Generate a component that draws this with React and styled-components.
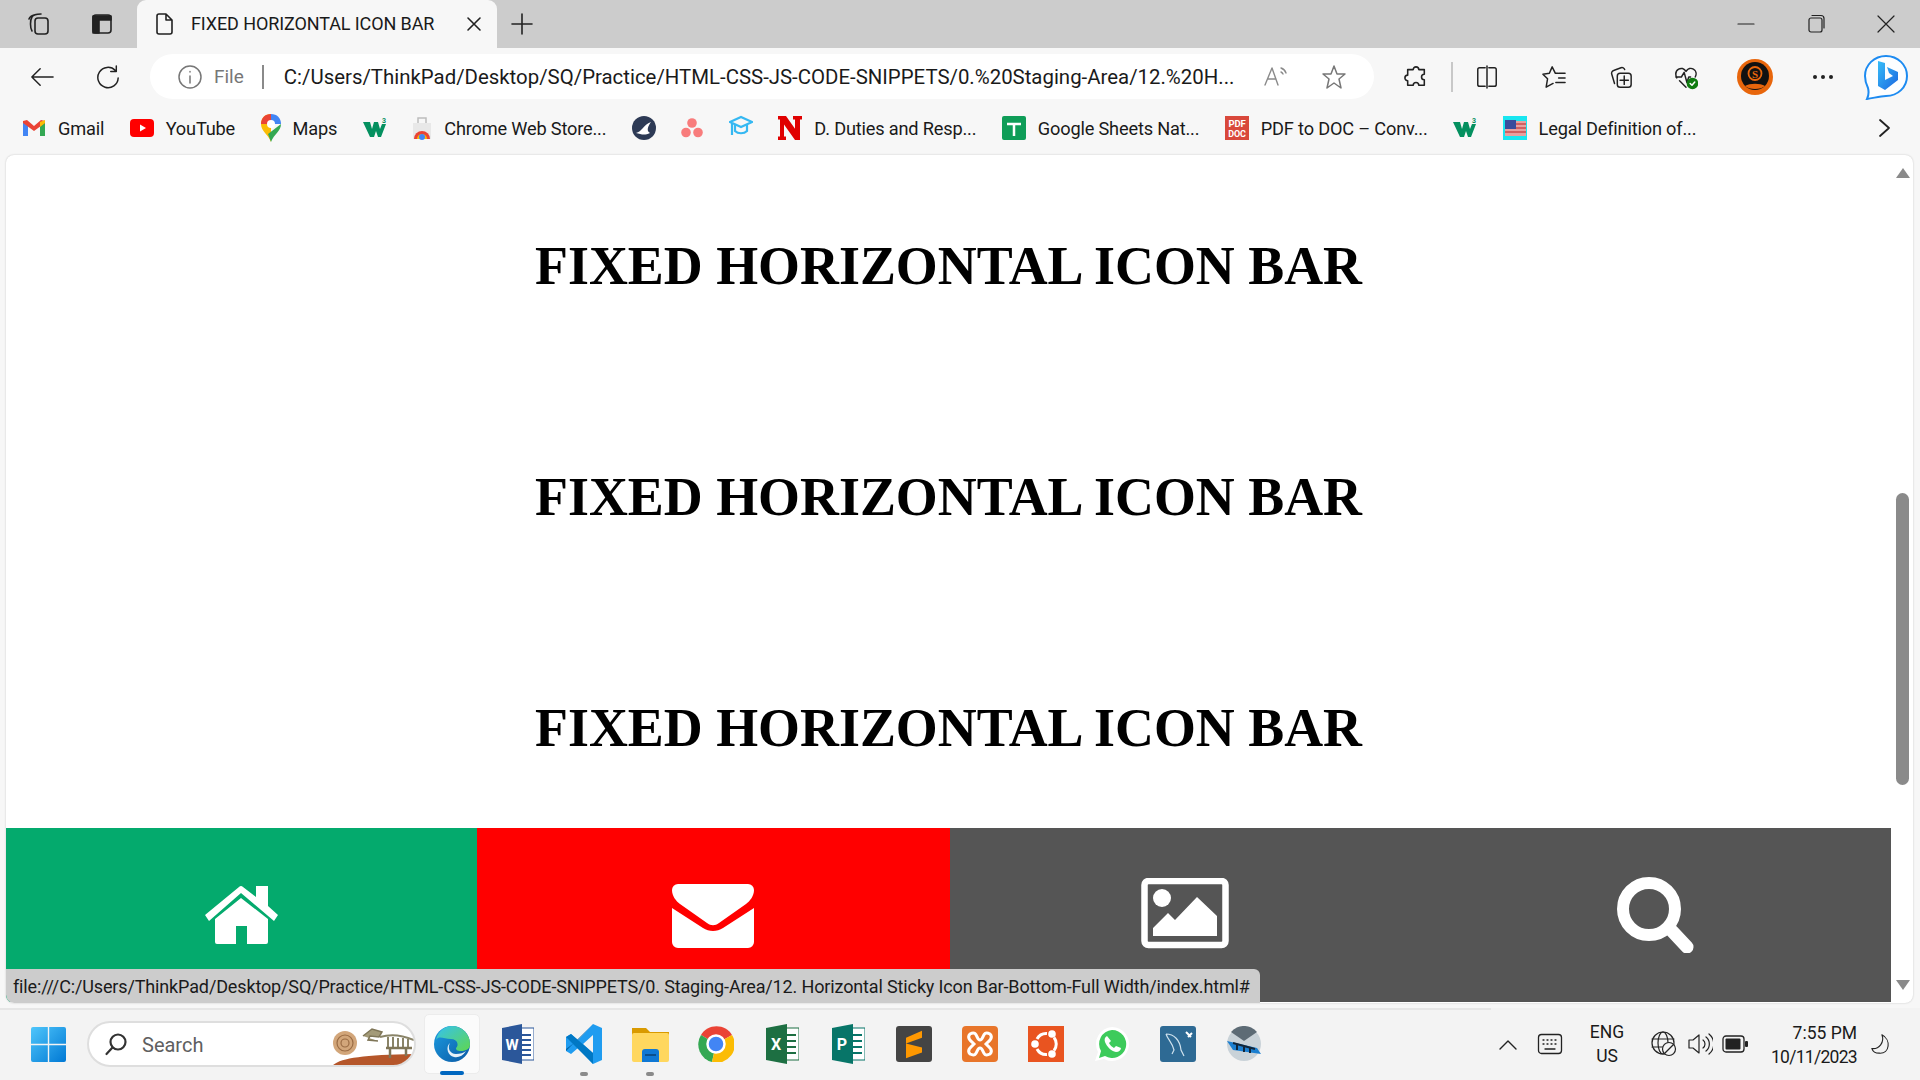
import React from 'react';
import styled, { createGlobalStyle } from 'styled-components';

const Global = createGlobalStyle`
    html, body { margin: 0; padding: 0; background: #f3f3f3; }
    * { box-sizing: border-box; }
`

const Frame = styled.div`
    width: 1920px;
    height: 1080px;
    display: flex;
    flex-direction: column;
    overflow: hidden;
    position: relative;
    background: #f7f7f7;
    font-family: Roboto, "Liberation Sans", sans-serif;
    color: #1a1a1a;
`

/* tab strip */
const TabStrip = styled.div`
    height: 48px;
    flex: none;
    display: flex;
    align-items: center;
    background: #cccccc;
    padding-left: 27px;
`
const StripButton = styled.div`
    width: ${p => p.$w || 24}px;
    height: 24px;
    margin-right: ${p => p.$mr || 0}px;
    display: flex;
    align-items: center;
    justify-content: center;
    flex: none;
`
const Tab = styled.div`
    width: 360px;
    height: 48px;
    flex: none;
    display: flex;
    align-items: center;
    background: #f7f7f7;
    border-radius: 9px 9px 0 0;
    padding: 0 15px 0 17px;
    margin-right: 14px;
`
const TabTitle = styled.span`
    font-size: 18px;
    letter-spacing: -0.1px;
    margin: 0 0 2px 17px;
    flex: 1;
    white-space: nowrap;
`
const WindowControls = styled.div`
    margin-left: auto;
    display: flex;
    padding-right: 22px;
    gap: 46px;
`

/* toolbar */
const Toolbar = styled.div`
    height: 58px;
    flex: none;
    display: flex;
    align-items: center;
    padding: 0 10px 1px 30px;
`
const ToolButton = styled.div`
    width: ${p => p.$w || 24}px;
    height: 36px;
    margin-right: ${p => p.$mr || 0}px;
    margin-left: ${p => p.$ml || 0}px;
    display: flex;
    align-items: center;
    justify-content: center;
    flex: none;
`
const AddressBar = styled.div`
    width: 1224px;
    height: 45px;
    flex: none;
    margin: 0 30px 0 30px;
    display: flex;
    align-items: center;
    background: #fff;
    border-radius: 23px;
    padding: 0 26px 0 27px;
`
const FileLabel = styled.span`
    font-size: 19px;
    color: #777;
    margin-left: 11px;
`
const Divider = styled.span`
    width: 2px;
    height: ${p => p.$h || 24}px;
    background: ${p => p.$c || '#8a8a8a'};
    margin: ${p => p.$m || '0 20px 0 18px'};
    flex: none;
`
const Url = styled.span`
    font-size: 20.4px;
    white-space: nowrap;
    width: 979px;
    flex: none;
`
const ToolbarDivider = styled(Divider)`
    margin: 0 22px 0 23px;
`

/* bookmarks */
const Bookmarks = styled.div`
    height: 49px;
    flex: none;
    display: flex;
    align-items: center;
    padding: 0 26px 5px 22px;
    gap: 25.5px;
`
const Bookmark = styled.div`
    display: flex;
    align-items: center;
    gap: 12px;
    flex: none;
    font-size: 18.2px;
    letter-spacing: -0.18px;
    white-space: nowrap;
    &:last-of-type { margin-right: auto; }
`

/* page */
const Page = styled.div`
    flex: 1;
    min-height: 0;
    margin: 0 7px 5px 6px;
    display: flex;
    background: #fff;
    border-radius: 8px;
    box-shadow: 0 0 2px rgba(0, 0, 0, 0.22);
    overflow: hidden;
    position: relative;
`
const Content = styled.div`
    flex: 1;
    display: flex;
    flex-direction: column;
    min-width: 0;
`
const Headings = styled.div`
    flex: 1;
    display: flex;
    flex-direction: column;
    gap: 167px;
    padding-top: 79px;
`
const Heading = styled.h1`
    margin: 0;
    text-align: center;
    font-family: "Liberation Serif", "Times New Roman", serif;
    font-weight: 700;
    font-size: 53.9px;
    line-height: 64px;
    color: #000;
    white-space: nowrap;
`
const IconBar = styled.div`
    height: 174px;
    flex: none;
    display: grid;
    grid-template-columns: 471px 473px 471px 470px;
    margin-bottom: 1px;
`
const BarLink = styled.a`
    display: flex;
    align-items: center;
    justify-content: center;
    background: ${p => p.$bg || '#555555'};
`
const Scrollbar = styled.div`
    width: 22px;
    flex: none;
    display: flex;
    flex-direction: column;
    align-items: center;
    padding: 13px 0 13px 1px;
`
const Thumb = styled.div`
    width: 13px;
    height: 292px;
    margin-top: 315px;
    background: #8a8a8a;
    border-radius: 7px;
`
const ArrowUp = styled.div`
    width: 0;
    height: 0;
    border-left: 7px solid transparent;
    border-right: 7px solid transparent;
    border-bottom: 10px solid #8a8a8a;
`
const ArrowDown = styled(ArrowUp)`
    margin-top: auto;
    border-bottom: none;
    border-top: 10px solid #8a8a8a;
`
const StatusBubble = styled.div`
    position: absolute;
    left: 0;
    bottom: 0;
    width: 1254px;
    height: 34px;
    display: flex;
    align-items: center;
    padding: 1px 0 0 7px;
    background: #cccccc;
    border-radius: 0 6px 0 8px;
    font-size: 18px;
    letter-spacing: -0.14px;
    white-space: nowrap;
`

/* taskbar */
const Taskbar = styled.div`
    height: 72px;
    flex: none;
    display: flex;
    align-items: center;
    background: #f3f3f3;
    position: relative;
    padding-left: 31px;
`
const TaskbarRule = styled.div`
    position: absolute;
    top: 0;
    left: 0;
    width: 1491px;
    height: 2px;
    background: #e6e6e6;
`
const SearchPill = styled.div`
    width: 329px;
    height: 46px;
    margin-left: 21px;
    flex: none;
    display: flex;
    align-items: center;
    background: #fff;
    border: 2px solid #dedede;
    border-radius: 23px;
    padding-left: 15px;
    position: relative;
    overflow: hidden;
`
const SearchText = styled.span`
    font-size: 20px;
    color: #5f5f5f;
    margin: 2px 0 0 14px;
`
const Decoration = styled.svg`
    position: absolute;
    right: 0;
    top: 3px;
`
const Apps = styled.div`
    display: flex;
    margin-left: 3px;
    flex: none;
`
const AppSlot = styled.div`
    width: 66px;
    height: 60px;
    display: flex;
    align-items: center;
    justify-content: center;
    position: relative;
    ${p => p.$active && `
        background: #fbfbfb;
        border: 1px solid #ececec;
        border-radius: 5px;
        width: 56px;
        margin: 0 5px;
    `}
`
const RunDot = styled.span`
    position: absolute;
    bottom: -2px;
    left: 50%;
    width: ${p => p.$active ? 24 : 8}px;
    height: 4px;
    margin-left: ${p => p.$active ? -12 : -4}px;
    border-radius: 2px;
    background: ${p => p.$active ? '#0067c0' : '#8a8a8a'};
`
const Tray = styled.div`
    margin-left: auto;
    display: flex;
    align-items: center;
    padding-right: 28px;
`
const TrayIcon = styled.div`
    display: flex;
    align-items: center;
    justify-content: center;
    width: ${p => p.$w || 26}px;
    margin-right: ${p => p.$mr || 0}px;
    flex: none;
`
const Lang = styled.div`
    font-size: 17.5px;
    line-height: 24px;
    text-align: center;
    width: 44px;
    margin-right: 22px;
    flex: none;
`
const Clock = styled.div`
    font-size: 17.5px;
    line-height: 24px;
    text-align: right;
    margin: 2px 13px 0 0;
    width: 90px;
    flex: none;
`
const ClockDate = styled.span`
    letter-spacing: -0.7px;
`

const Stroke = ({ s = 24, w, h, c = '#222', sw = 1.6, children }) => (
    <svg width={w || s} height={h || s} viewBox={`0 0 ${w || s} ${h || s}`} fill="none" stroke={c} strokeWidth={sw} strokeLinecap="round" strokeLinejoin="round">
        {children}
    </svg>
)

/* the four bar icons */
const HomeIcon = () => (
    <svg width="73" height="58" viewBox="0 0 73 58" fill="#fff">
        <path d="M36 12 L63 33 V56 a2 2 0 0 1-2 2 H42 V40 H31 V58 H12 a2 2 0 0 1-2-2 V33 Z" />
        <path d="M34 1 a3 3 0 0 1 4 0 L51 11 V0 H63 V20 L73 29 L69 35 L36 7 L4 35 L0 29 Z" />
    </svg>
)
const MailIcon = () => (
    <svg width="84" height="66" viewBox="0 -2 84 66" fill="#fff">
        <path d="M6 0 H76 a6 6 0 0 1 6 6 c0 6-4 11-8 14 L47 39 c-4 3-8 3-12 0 L8 20 C4 17 0 12 0 6 a6 6 0 0 1 6-6z" />
        <path d="M0 24 L31 44 c6 4 14 4 20 0 L82 24 V58 a6 6 0 0 1-6 6 H6 a6 6 0 0 1-6-6z" />
    </svg>
)
const PictureIcon = () => (
    <svg width="90" height="74" viewBox="0 0 90 74" fill="#fff">
        <rect x="3.5" y="3" width="81" height="64" rx="4" fill="none" stroke="#fff" strokeWidth="6.5" />
        <ellipse cx="21" cy="20" rx="9" ry="9" />
        <path d="M12 58 V50 L27 35 L34 42 L56 19 L76 38 V58 Z" />
    </svg>
)
const SearchIcon = () => (
    <svg width="78" height="76" viewBox="0 0 78 76" fill="none" stroke="#fff" strokeLinecap="round">
        <circle cx="32" cy="32" r="26" strokeWidth="12" />
        <path d="M55 54 L70 70" strokeWidth="13" />
    </svg>
)

/* bookmark logos */
const GmailLogo = () => (
    <svg width="24" height="24" viewBox="0 0 24 24">
        <path d="M1 6 v14 h5 V10z" fill="#4285f4" />
        <path d="M23 6 v14 h-5 V10z" fill="#34a853" />
        <path d="M1 7 L12 15 L23 7 V5 L19 4 L12 10 L5 4 L1 5z" fill="#ea4335" />
        <path d="M18 6 L23 4 v3 L18 11z" fill="#fbbc04" />
    </svg>
)
const YoutubeLogo = () => (
    <svg width="24" height="24" viewBox="0 0 24 24">
        <rect y="3" width="24" height="18" rx="4" fill="#f00" />
        <path d="M10 8.500 L16 12 L10 15.500z" fill="#fff" />
    </svg>
)
const MapsLogo = () => (
    <svg width="20" height="28" viewBox="0 0 20 28">
        <path d="M10 0 C4 0 0 4 0 10 c0 7 7 10 10 18z" fill="#fbbc04" />
        <path d="M10 0 C16 0 20 4 20 10 L10 10z" fill="#4285f4" />
        <path d="M0 10 C0 4 4 0 10 0 L10 10z" fill="#ea4335" />
        <path d="M20 10 c0 7-7 10-10 18 L7 20z" fill="#34a853" />
        <circle cx="10" cy="10" r="4" fill="#fff" />
    </svg>
)
const W3Logo = () => (
    <svg width="24" height="24" viewBox="0 0 24 24">
        <path d="M0 6 H7 L9 13 L11 6 H15 L17 13 L19 8 H23 L18 21 H15 L13 15 L11 21 H7z" fill="#04905f" />
        <text x="19" y="7" fontSize="7" fontWeight="700" fill="#04905f" fontFamily="Roboto">3</text>
    </svg>
)
const StoreLogo = () => (
    <svg width="20" height="24" viewBox="0 0 20 24">
        <path d="M1 7 H19 V23 H1z" fill="#e8e8e8" />
        <path d="M6 7 V2 H14 V7" fill="none" stroke="#bdbdbd" strokeWidth="1.500" />
        <path d="M2 23 a8 8 0 0 1 16 0z" fill="#ea4335" />
        <path d="M5 23 a5 5 0 0 1 10 0z" fill="#fbbc04" />
        <circle cx="10" cy="21" r="3" fill="#4285f4" />
    </svg>
)
const EduLogo = () => (
    <svg width="24" height="24" viewBox="0 0 24 24">
        <circle cx="12" cy="12" r="12" fill="#2d3a55" />
        <path d="M4 17 C10 16 11 9 19 6 C16 10 14 15 18 17 C12 20 9 18 4 17z" fill="#fff" />
    </svg>
)
const AsanaLogo = () => (
    <svg width="22" height="20" viewBox="0 0 22 20" fill="#f87c7c">
        <circle cx="11" cy="5" r="4.800" />
        <circle cx="5" cy="14.500" r="4.800" />
        <circle cx="17" cy="14.500" r="4.800" />
    </svg>
)
const GradLogo = () => (
    <svg width="24" height="26" viewBox="0 0 24 26" fill="none" stroke="#35b8f2" strokeWidth="2.200">
        <path d="M1 7 L12 2 L23 7 L12 12z" />
        <path d="M6 10 V16 C9 19 15 19 18 16 V10" />
        <path d="M3 8 V20" />
    </svg>
)
const NLogo = () => (
    <svg width="24" height="24" viewBox="0 0 24 28" preserveAspectRatio="none">
        <path d="M0 0 H8 L17 15 V4 H15 V0 H24 V4 H22 V28 H17 L6 10 V24 H8 V28 H0 V24 H2 V4 H0z" fill="#e00000" />
    </svg>
)
const SheetsLogo = () => (
    <svg width="24" height="24" viewBox="0 0 24 24">
        <rect width="24" height="24" rx="2" fill="#0f9d58" />
        <path d="M5 8 H19 M12 8 V20" stroke="#fff" strokeWidth="2.500" />
    </svg>
)
const PdfLogo = () => (
    <svg width="24" height="24" viewBox="0 0 24 24">
        <rect width="24" height="24" fill="#d9483b" />
        <text x="12" y="10.500" textAnchor="middle" fontSize="9.500" fontWeight="700" fill="#fff" fontFamily="Roboto">PDF</text>
        <text x="12" y="21" textAnchor="middle" fontSize="9" fontWeight="700" fill="#fff" fontFamily="Roboto">DOC</text>
    </svg>
)
const FlagLogo = () => (
    <svg width="24" height="24" viewBox="0 0 24 24">
        <rect width="24" height="24" fill="#19e6f0" />
        <path d="M2 5 H23 V20 H2z" fill="#e8a0a0" />
        <path d="M2 8 H23 M2 12 H23 M2 16 H23" stroke="#c84c4c" strokeWidth="1.500" />
        <rect x="2" y="4" width="11" height="9" fill="#3a4c9c" />
    </svg>
)

/* taskbar logos */
const WinLogo = () => (
    <svg width="35" height="35" viewBox="0 0 35 35">
        <defs><linearGradient id="win" x1="0" y1="0" x2="1" y2="1"><stop offset="0" stopColor="#4fc6fb" /><stop offset="1" stopColor="#0078d4" /></linearGradient></defs>
        <path d="M2 0 H16.800 V16.800 H0 V2 a2 2 0 0 1 2-2z M18.200 0 H33 a2 2 0 0 1 2 2 V16.800 H18.200z M0 18.200 H16.800 V35 H2 a2 2 0 0 1-2-2z M18.200 18.200 H35 V33 a2 2 0 0 1-2 2 H18.200z" fill="url(#win)" />
    </svg>
)
const EdgeLogo = () => (
    <svg width="36" height="36" viewBox="0 0 36 36">
        <defs>
            <linearGradient id="edgeA" x1="0" y1="0" x2="1" y2="1"><stop offset="0" stopColor="#35c1f1" /><stop offset="1" stopColor="#5fd74f" /></linearGradient>
            <linearGradient id="edgeB" x1="0" y1="0" x2="1" y2="1"><stop offset="0" stopColor="#1b9de2" /><stop offset="1" stopColor="#0c59a4" /></linearGradient>
        </defs>
        <circle cx="18" cy="18" r="18" fill="url(#edgeB)" />
        <path d="M2 14 C4 4 12 0 18 0 C28 0 36 8 36 18 c0 5-4 7-9 7 c-4 0-5-1-5-3 c3-2 2-9-5-9 C10 13 5 9 2 14z" fill="url(#edgeA)" />
        <path d="M16 17 c-3 5 0 11 6 11 c4 0 8-1 10-3 c-3 5-8 7-12 6 c-6-1-9-10-4-14z" fill="#fff" opacity="0.9" />
    </svg>
)
const WordLogo = () => (
    <svg width="32" height="40" viewBox="0 0 32 40">
        <rect x="10" y="4" width="22" height="32" fill="#fff" stroke="#2b579a" />
        <path d="M17 11 H29 M17 16 H29 M17 21 H29 M17 26 H29 M17 31 H29" stroke="#2b579a" strokeWidth="2" />
        <path d="M0 4 L20 0 V40 L0 36z" fill="#2b579a" />
        <text x="10" y="26" textAnchor="middle" fontSize="15" fontWeight="700" fill="#fff" fontFamily="Roboto">W</text>
    </svg>
)
const VsCodeLogo = () => (
    <svg width="36" height="40" viewBox="0 0 36 40">
        <path d="M27 0 L36 4 V36 L27 40 L12 24 L5 30 L0 27 V13 L5 10 L12 16z M27 11 L17 20 L27 29z" fill="#1f9cf0" fillRule="evenodd" />
        <path d="M27 0 L5 22 L0 27 V25 L12 16 L27 0z" fill="#0065a9" />
        <path d="M0 13 L5 10 L27 29 V40 L5 18z" fill="#0078c4" />
    </svg>
)
const FolderLogo = () => (
    <svg width="37" height="36" viewBox="0 0 37 36">
        <path d="M0 2 H14 L18 6 H37 V12 H0z" fill="#d99a00" />
        <rect y="7" width="37" height="29" rx="2" fill="#ffd75e" />
        <path d="M10 36 V26 a3 3 0 0 1 3-3 H24 a3 3 0 0 1 3 3 V36z" fill="#0f78d4" />
        <path d="M13 29 H24" stroke="#0b4f8c" strokeWidth="2" />
    </svg>
)
const ChromeLogo = () => (
    <svg width="36" height="36" viewBox="0 0 36 36">
        <path d="M18 18 L3 9 A18 18 0 0 1 34 9z" fill="#ea4335" />
        <path d="M18 18 L3 9 A18 18 0 0 0 14 36z" fill="#34a853" />
        <path d="M18 18 L34 9 A18 18 0 0 1 14 36z" fill="#fbbc04" />
        <circle cx="18" cy="18" r="8.500" fill="#4285f4" stroke="#fff" strokeWidth="2.500" />
    </svg>
)
const OfficeLogo = ({ color, letter }) => (
    <svg width="33" height="40" viewBox="0 0 33 40">
        <rect x="13" y="4" width="20" height="32" fill="#fff" stroke={color} />
        <path d="M19 11 H30 M19 17 H30 M19 23 H30 M19 29 H30" stroke={color} strokeWidth="2" />
        <path d="M0 4 L21 0 V40 L0 36z" fill={color} />
        <text x="10" y="26" textAnchor="middle" fontSize="16" fontWeight="700" fill="#fff" fontFamily="Roboto">{letter}</text>
    </svg>
)
const SublimeLogo = () => (
    <svg width="36" height="36" viewBox="0 0 36 36">
        <rect width="36" height="36" rx="3" fill="#444" />
        <path d="M26 7 V14 L10 20 V14z M10 20 L26 24 V29 L10 35 V27z" fill="#ff9800" transform="translate(0 -2) scale(1 .98)" />
    </svg>
)
const XamppLogo = () => (
    <svg width="36" height="36" viewBox="0 0 36 36" fill="none">
        <rect width="36" height="36" rx="4" fill="#e8752a" />
        <path d="M8 8 C16 4 14 14 18 14 C22 14 20 4 28 8 C32 12 26 16 24 18 C26 20 32 24 28 28 C20 32 22 22 18 22 C14 22 16 32 8 28 C4 24 10 20 12 18 C10 16 4 12 8 8z" stroke="#fff" strokeWidth="3" />
    </svg>
)
const UbuntuLogo = () => (
    <svg width="36" height="36" viewBox="0 0 36 36" fill="none">
        <rect width="36" height="36" fill="#e95420" />
        <path d="M9 13 A10.500 10.500 0 0 1 19 7.500 M26 11.500 A10.500 10.500 0 0 1 26 24.500 M19 28.500 A10.500 10.500 0 0 1 9 23" stroke="#fff" strokeWidth="3" />
        <circle cx="7" cy="18" r="3.800" fill="#fff" />
        <circle cx="24" cy="8" r="3.800" fill="#fff" />
        <circle cx="24" cy="28" r="3.800" fill="#fff" />
    </svg>
)
const WhatsappLogo = () => (
    <svg width="36" height="36" viewBox="0 0 36 36">
        <path d="M18 1 A17 17 0 1 1 10 33 L1 35 L4 26 A17 17 0 0 1 18 1z" fill="#fff" />
        <path d="M18 4 A14 14 0 1 1 11 30 L5 32 L7 25 A14 14 0 0 1 18 4z" fill="#3dcb5b" />
        <path d="M13 10 c-2 1-3 3-2 6 c2 5 6 9 11 10 c3 0 5-2 5-4 l-5-2 l-2 2 c-2-1-4-3-5-5 l2-2z" fill="#fff" />
    </svg>
)
const MysqlLogo = () => (
    <svg width="36" height="36" viewBox="0 0 36 36" fill="none">
        <rect width="36" height="36" rx="3" fill="#2e6a94" />
        <path d="M6 8 C14 8 20 14 21 24 L24 30 M6 8 C8 14 12 16 14 24 L12 28" stroke="#cfe2ee" strokeWidth="1.200" />
        <path d="M26 6 L31 11 M28 11 L32 7" stroke="#fff" strokeWidth="2" />
    </svg>
)
const ScreenLogo = () => (
    <svg width="34" height="36" viewBox="0 0 34 36">
        <circle cx="17" cy="18" r="17" fill="#c9d2d8" />
        <path d="M4 6 A17 17 0 0 1 30 6 L17 15z" fill="#5d6b75" />
        <path d="M0 15 L30 22 L34 28 L6 24z" fill="#1c7fd0" />
        <path d="M6 17 L28 23 M10 18 V24 M17 20 V26 M23 21 V27" stroke="#12263a" strokeWidth="2" />
    </svg>
)

const Fossils = () => (
    <Decoration width="82" height="40" viewBox="0 0 82 40">
        <path d="M0 40 C8 32 30 29 82 28 V40z" fill="#b5562a" />
        <circle cx="13" cy="17" r="12" fill="#d2a67a" />
        <circle cx="13" cy="17" r="8" fill="none" stroke="#9a6c44" strokeWidth="1.200" />
        <circle cx="13" cy="17" r="4" fill="none" stroke="#9a6c44" strokeWidth="1.200" />
        <path d="M31 10 L40 3 L50 6 L47 11 L38 10 L36 14 L46 15" fill="#a39a78" stroke="#7f7658" strokeWidth="1.500" />
        <path d="M48 11 C58 8 70 9 82 14 M56 11 V22 M61 11 V22 M66 12 V22 M71 12 V22 M76 13 V22" fill="none" stroke="#8a8468" strokeWidth="2" />
        <path d="M54 22 H80 M58 22 V32 M74 22 V30" fill="none" stroke="#7f7658" strokeWidth="2.500" />
    </Decoration>
)

const bookmarks = [
    { logo: <GmailLogo />, label: 'Gmail' },
    { logo: <YoutubeLogo />, label: 'YouTube' },
    { logo: <MapsLogo />, label: 'Maps' },
    { logo: <W3Logo /> },
    { logo: <StoreLogo />, label: 'Chrome Web Store...' },
    { logo: <EduLogo /> },
    { logo: <AsanaLogo /> },
    { logo: <GradLogo /> },
    { logo: <NLogo />, label: 'D. Duties and Resp...' },
    { logo: <SheetsLogo />, label: 'Google Sheets Nat...' },
    { logo: <PdfLogo />, label: 'PDF to DOC – Conv...' },
    { logo: <W3Logo /> },
    { logo: <FlagLogo />, label: 'Legal Definition of...' },
]

const apps = [
    { logo: <WordLogo /> },
    { logo: <VsCodeLogo />, dot: true },
    { logo: <FolderLogo />, dot: true },
    { logo: <ChromeLogo /> },
    { logo: <OfficeLogo color="#1d6f42" letter="X" /> },
    { logo: <OfficeLogo color="#077568" letter="P" /> },
    { logo: <SublimeLogo /> },
    { logo: <XamppLogo /> },
    { logo: <UbuntuLogo /> },
    { logo: <WhatsappLogo /> },
    { logo: <MysqlLogo /> },
    { logo: <ScreenLogo /> },
]

const title = 'FIXED HORIZONTAL ICON BAR';

export default function App() {
    return (
        <Frame>
            <Global />
            <TabStrip>
                <StripButton $mr={39}>
                    <Stroke>
                        <rect x="8" y="6" width="13" height="16" rx="3" />
                        <path d="M5 19 C3 16 3 8 5 5 C6 3 10 2 14 2 M9 2.500 C6 3 3 4 2 7" />
                    </Stroke>
                </StripButton>
                <StripButton $mr={23}>
                    <Stroke>
                        <rect x="3" y="3" width="18" height="18" rx="3" />
                        <path d="M3 4 H21 V8 H9 V21 H3z" fill="#222" />
                    </Stroke>
                </StripButton>
                <Tab>
                    <Stroke w={20} h={24}>
                        <path d="M3 4 a2 2 0 0 1 2-2 H12 L18 8 V20 a2 2 0 0 1-2 2 H5 a2 2 0 0 1-2-2z M12 2 V8 H18" />
                    </Stroke>
                    <TabTitle>{title}</TabTitle>
                    <Stroke s={16}>
                        <path d="M2 2 L14 14 M14 2 L2 14" />
                    </Stroke>
                </Tab>
                <Stroke s={22}>
                    <path d="M11 1 V21 M1 11 H21" />
                </Stroke>
                <WindowControls>
                    <Stroke s={24} sw={1.2}>
                        <path d="M4 12 H20" />
                    </Stroke>
                    <Stroke s={24} sw={1.2}>
                        <rect x="5" y="6" width="13" height="14" rx="2" />
                        <path d="M8 3.500 H17 a3 3 0 0 1 3 3 V16" />
                    </Stroke>
                    <Stroke s={24} sw={1.2}>
                        <path d="M4 4 L20 20 M20 4 L4 20" />
                    </Stroke>
                </WindowControls>
            </TabStrip>

            <Toolbar>
                <ToolButton $mr={42}>
                    <Stroke s={26}>
                        <path d="M25 13 H2 M11 4 L2 13 L11 22" />
                    </Stroke>
                </ToolButton>
                <ToolButton>
                    <Stroke s={26}>
                        <path d="M21 6 A11 11 0 1 0 24 14 M22 1 V7 H16" />
                    </Stroke>
                </ToolButton>
                <AddressBar>
                    <Stroke s={26} c="#777" sw={1.5}>
                        <circle cx="13" cy="13" r="11" />
                        <path d="M13 12 V19 M13 7.500 V8" />
                    </Stroke>
                    <FileLabel>File</FileLabel>
                    <Divider />
                    <Url>C:/Users/ThinkPad/Desktop/SQ/Practice/HTML-CSS-JS-CODE-SNIPPETS/0.%20Staging-Area/12.%20H...</Url>
                    <Stroke s={26} c="#8a8a8a" sw={1.4}>
                        <path d="M2 21 L9 4 L15 21 M5 15 H13 M18 4 a8 8 0 0 1 5 5 M18 8 a4 4 0 0 1 2 2" />
                    </Stroke>
                    <ToolButton $w={26} $ml={32}>
                        <Stroke s={26} c="#777" sw={1.5}>
                            <path d="M13 2 L16 10 L24 10 L18 15 L20 24 L13 19 L6 24 L8 15 L2 10 L10 10z" />
                        </Stroke>
                    </ToolButton>
                </AddressBar>
                <ToolButton>
                    <Stroke s={26} sw={1.7}>
                        <path d="M10 5 a3 3 0 0 1 6 0 h6 v5 a3 3 0 0 0 0 6 v6 h-6 a3 3 0 0 0-6 0 H4 v-5 a3 3 0 0 1 0-6 V5z" />
                    </Stroke>
                </ToolButton>
                <ToolbarDivider $h={30} $c="#c8c8c8" />
                <ToolButton $mr={43}>
                    <Stroke s={26}>
                        <path d="M11 3 H5 a2 2 0 0 0-2 2 V21 a2 2 0 0 0 2 2 H11 M15 3 H21 a2 2 0 0 1 2 2 V21 a2 2 0 0 1-2 2 H15 M13 1 V25" />
                    </Stroke>
                </ToolButton>
                <ToolButton $mr={43}>
                    <Stroke s={26}>
                        <path d="M17 9 H14.500 L11 2 L8 9 L1 10 L6 15 L4.500 24 L12 20 M18 9 H25 M18 14 H25 M15 19 H25" />
                    </Stroke>
                </ToolButton>
                <ToolButton $mr={41}>
                    <Stroke s={26}>
                        <rect x="9" y="9" width="15" height="15" rx="3" />
                        <path d="M16.500 12 V21 M12 16.500 H21 M6 20 L3 10 a3 3 0 0 1 2-4 L13 3 a3 3 0 0 1 4 2" />
                    </Stroke>
                </ToolButton>
                <ToolButton $mr={39}>
                    <Stroke s={26}>
                        <path d="M3 14 C-1 5 9 0 13 7 C17 0 27 5 23 13 M2 13 H8 L11 8 L14 19 L16 13 H18 M6 17 L13 24" />
                        <circle cx="20" cy="20" r="5.500" fill="#107c10" stroke="#107c10" />
                        <path d="M17.500 20 L19.500 22 L22.500 18.500" stroke="#fff" />
                    </Stroke>
                </ToolButton>
                <ToolButton $w={36} $mr={38}>
                    <svg width="36" height="36" viewBox="0 0 36 36">
                        <circle cx="18" cy="18" r="18" fill="#e8660c" />
                        <circle cx="18" cy="17" r="14" fill="#111" />
                        <circle cx="18" cy="14.500" r="6.500" fill="none" stroke="#e8660c" strokeWidth="1.800" />
                        <path d="M8 27 C13 24 23 24 28 27 C24 31 12 31 8 27z" fill="#e8660c" />
                        <text x="18" y="18.500" textAnchor="middle" fontSize="11" fontWeight="700" fill="#e8660c" fontFamily="Liberation Serif">S</text>
                    </svg>
                </ToolButton>
                <ToolButton $mr={29}>
                    <svg width="24" height="6" viewBox="0 0 24 6" fill="#222">
                        <circle cx="4" cy="3" r="2" />
                        <circle cx="12" cy="3" r="2" />
                        <circle cx="20" cy="3" r="2" />
                    </svg>
                </ToolButton>
                <ToolButton $w={45}>
                    <svg width="45" height="46" viewBox="0 0 45 46">
                        <defs><linearGradient id="bing" x1="0" y1="0" x2="1" y2="1"><stop offset="0" stopColor="#37bdf8" /><stop offset="1" stopColor="#1b66e0" /></linearGradient></defs>
                        <path d="M22 2 C34 2 43 11 43 22 C43 33 34 42 22 42 C16 42 10 44 3 45 C5 41 5 38 4 34 C2 30 1 26 1 22 C1 11 10 2 22 2z" fill="#fdfeff" stroke="#1d8bf1" strokeWidth="2" />
                        <path d="M14 7 L21 9 V26 L29 22 L25 19 L23 13 L34 18 V26 L21 36 L14 32z" fill="url(#bing)" />
                    </svg>
                </ToolButton>
            </Toolbar>

            <Bookmarks>
                {bookmarks.map((b, i) => (
                    <Bookmark key={i}>
                        {b.logo}
                        {b.label && <span>{b.label}</span>}
                    </Bookmark>
                ))}
                <Stroke s={20} sw={1.8}>
                    <path d="M6 2 L15 10 L6 18" />
                </Stroke>
            </Bookmarks>

            <Page>
                <Content>
                    <Headings>
                        <Heading>{title}</Heading>
                        <Heading>{title}</Heading>
                        <Heading>{title}</Heading>
                    </Headings>
                    <IconBar>
                        <BarLink $bg="#04aa6d"><HomeIcon /></BarLink>
                        <BarLink $bg="#ff0000"><MailIcon /></BarLink>
                        <BarLink><PictureIcon /></BarLink>
                        <BarLink><SearchIcon /></BarLink>
                    </IconBar>
                </Content>
                <Scrollbar>
                    <ArrowUp />
                    <Thumb />
                    <ArrowDown />
                </Scrollbar>
                <StatusBubble>file:///C:/Users/ThinkPad/Desktop/SQ/Practice/HTML-CSS-JS-CODE-SNIPPETS/0. Staging-Area/12. Horizontal Sticky Icon Bar-Bottom-Full Width/index.html#</StatusBubble>
            </Page>

            <Taskbar>
                <TaskbarRule />
                <WinLogo />
                <SearchPill>
                    <Stroke s={24} sw={2.2} c="#333">
                        <circle cx="14" cy="10" r="7.500" />
                        <path d="M8.500 15.500 L2.500 22" />
                    </Stroke>
                    <SearchText>Search</SearchText>
                    <Fossils />
                </SearchPill>
                <Apps>
                    <AppSlot $active>
                        <EdgeLogo />
                        <RunDot $active />
                    </AppSlot>
                    {apps.map((a, i) => (
                        <AppSlot key={i}>
                            {a.logo}
                            {a.dot && <RunDot />}
                        </AppSlot>
                    ))}
                </Apps>
                <Tray>
                    <TrayIcon $mr={16}>
                        <Stroke s={20} sw={1.4}>
                            <path d="M2 15 L10 7 L18 15" />
                        </Stroke>
                    </TrayIcon>
                    <TrayIcon $mr={22}>
                        <Stroke s={26} sw={1.3}>
                            <rect x="1.500" y="3.500" width="23" height="19" rx="3" />
                            <path d="M6 9 H7 M10 9 H11 M14 9 H15 M18 9 H19 M6 13 H7 M10 13 H11 M14 13 H15 M18 13 H19 M8 18 H18" />
                        </Stroke>
                    </TrayIcon>
                    <Lang>ENG<br />US</Lang>
                    <TrayIcon $mr={10}>
                        <Stroke s={26} sw={1.2}>
                            <circle cx="12" cy="12" r="11" />
                            <ellipse cx="12" cy="12" rx="5" ry="11" />
                            <path d="M1 8 H23 M1 16 H14" />
                            <circle cx="18" cy="18" r="6.500" fill="#f3f3f3" />
                            <path d="M14 22 L22 14" />
                        </Stroke>
                    </TrayIcon>
                    <TrayIcon $mr={9}>
                        <Stroke s={26} sw={1.2}>
                            <path d="M2 9 H6 L12 4 V22 L6 17 H2z M16 9 a5 5 0 0 1 0 8 M19 6 a9 9 0 0 1 0 14 M22 3 a13 13 0 0 1 0 20" />
                        </Stroke>
                    </TrayIcon>
                    <TrayIcon $mr={19}>
                        <svg width="26" height="20" viewBox="0 0 26 20">
                            <rect x="1" y="2" width="21" height="16" rx="3" fill="none" stroke="#222" strokeWidth="1.300" />
                            <rect x="3.500" y="4.500" width="15" height="11" rx="1" fill="#222" />
                            <rect x="23" y="7" width="3" height="6" rx="1" fill="#222" />
                        </svg>
                    </TrayIcon>
                    <Clock>7:55 PM<br /><ClockDate>10/11/2023</ClockDate></Clock>
                    <TrayIcon $w={22}>
                        <Stroke s={24} sw={1.2}>
                            <path d="M13 2 C23 7 22 23 10 22 C6 22 3 20 2 17 C10 18 16 10 13 2z" />
                        </Stroke>
                    </TrayIcon>
                </Tray>
            </Taskbar>
        </Frame>
    );
}
